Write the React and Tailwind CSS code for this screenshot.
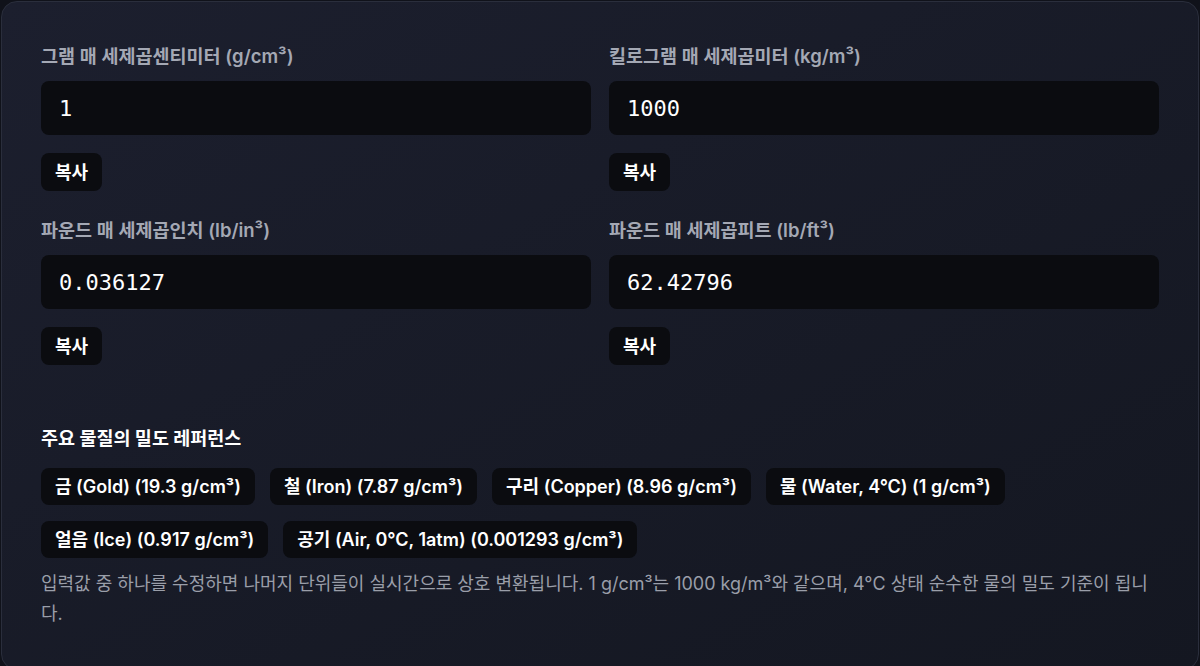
import React, { useState } from "react";

const UNITS = [
  { key: "gcm3", label: "그램 매 세제곱센티미터 (g/cm³)", factor: 1 },
  { key: "kgm3", label: "킬로그램 매 세제곱미터 (kg/m³)", factor: 1000 },
  { key: "lbin3", label: "파운드 매 세제곱인치 (lb/in³)", factor: 0.0361273 },
  { key: "lbft3", label: "파운드 매 세제곱피트 (lb/ft³)", factor: 62.42796 },
];

const REFS = [
  "금 (Gold) (19.3 g/cm³)",
  "철 (Iron) (7.87 g/cm³)",
  "구리 (Copper) (8.96 g/cm³)",
  "물 (Water, 4°C) (1 g/cm³)",
  "얼음 (Ice) (0.917 g/cm³)",
  "공기 (Air, 0°C, 1atm) (0.001293 g/cm³)",
];

// 소수 6자리까지, 뒤쪽 0은 제거
const fmt = (n) => {
  if (!isFinite(n)) return "";
  return String(parseFloat(n.toFixed(6)));
};

function Field({ label, value, onChange }) {
  return (
    <div className="flex flex-col">
      <label className="text-[18.5px] leading-[26px] font-semibold text-[#a4a8b4]">{label}</label>
      <input
        value={value}
        onChange={(e) => onChange(e.target.value)}
        className="mt-[12px] h-[54px] w-full rounded-lg bg-[#0b0c10] px-[18px] text-[22px] text-white outline-none"
        style={{ fontFamily: '"DejaVu Sans Mono", "Liberation Mono", monospace' }}
      />
      <button
        type="button"
        onClick={() => navigator.clipboard && navigator.clipboard.writeText(value)}
        className="mt-[18px] h-[38px] w-fit rounded-lg bg-[#0b0c10] px-[14px] text-[18px] font-semibold text-white"
      >
        복사
      </button>
    </div>
  );
}

export default function App() {
  const [base, setBase] = useState(1);
  const [edit, setEdit] = useState(null);

  const valueOf = (u) => (edit && edit.key === u.key ? edit.text : fmt(base * u.factor));

  const handle = (u) => (text) => {
    setEdit({ key: u.key, text });
    const n = parseFloat(text);
    if (!isNaN(n)) setBase(n / u.factor);
  };

  return (
    <div
      className="min-h-screen bg-[#10121a] p-px"
      style={{ fontFamily: 'Inter, "Noto Sans CJK KR", sans-serif' }}
    >
      <div className="min-h-[664px] rounded-2xl border border-[#2a2e3c] bg-gradient-to-br from-[#1c1f2e] to-[#141721] px-[39px] pt-[41px] pb-10">
        <div className="grid grid-cols-2 gap-x-[18px] gap-y-[26px]">
          {UNITS.map((u) => (
            <Field key={u.key} label={u.label} value={valueOf(u)} onChange={handle(u)} />
          ))}
        </div>

        <h3 className="mt-[60px] text-[18.5px] leading-[26px] font-bold text-white">주요 물질의 밀도 레퍼런스</h3>
        <div className="mt-[17px] flex flex-wrap gap-x-[15px] gap-y-[16px]">
          {REFS.map((r) => (
            <span
              key={r}
              className="flex h-[37px] items-center rounded-lg bg-[#0b0c10] px-[14px] text-[18px] font-semibold text-white"
            >
              {r}
            </span>
          ))}
        </div>

        <p className="mt-[11px] text-[18px] leading-[30px] text-[#9a9ea9]">
          입력값 중 하나를 수정하면 나머지 단위들이 실시간으로 상호 변환됩니다. 1 g/cm³는 1000 kg/m³와 같으며, 4°C 상태 순수한 물의 밀도 기준이 됩니다.
        </p>
      </div>
    </div>
  );
}
